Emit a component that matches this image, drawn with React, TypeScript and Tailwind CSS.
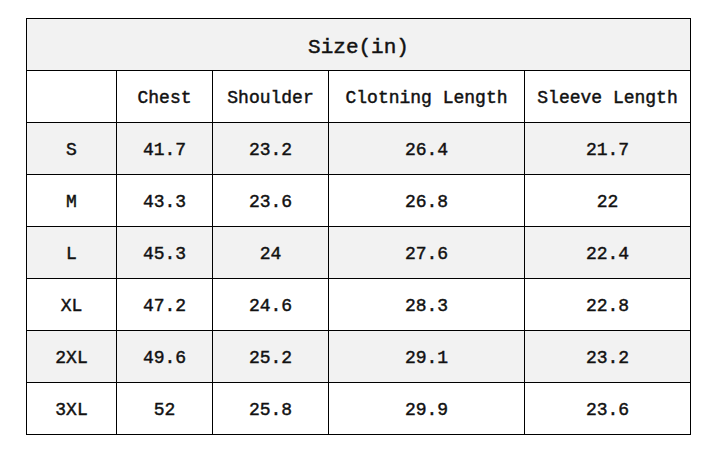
import React from "react";

const cols = ["", "Chest", "Shoulder", "Clotning Length", "Sleeve Length"];
const rows = [
  ["S", "41.7", "23.2", "26.4", "21.7"],
  ["M", "43.3", "23.6", "26.8", "22"],
  ["L", "45.3", "24", "27.6", "22.4"],
  ["XL", "47.2", "24.6", "28.3", "22.8"],
  ["2XL", "49.6", "25.2", "29.1", "23.2"],
  ["3XL", "52", "25.8", "29.9", "23.6"],
];

export default function App() {
  return (
    <div className="w-[716px] h-[452px] bg-white pt-[18px] pl-[26px]" style={{ fontFamily: '"Liberation Mono", monospace' }}>
      <div className="w-[665px] grid grid-cols-[89px_95px_115px_195px_165px] auto-rows-[51px] gap-px bg-black border border-black text-[#111] [-webkit-text-stroke:0.45px_#111]">
        <div className="col-span-5 bg-[#f2f2f2] flex items-center justify-center text-[21px] pt-[6px]">Size(in)</div>
        {cols.map((c, i) => (
          <div key={"h" + i} className="bg-white flex items-center justify-center text-[18px] pt-[4px] whitespace-pre">
            {c}
          </div>
        ))}
        {rows.map((r, ri) =>
          r.map((v, ci) => (
            <div
              key={ri + "-" + ci}
              className={`${ri % 2 === 0 ? "bg-[#f2f2f2]" : "bg-white"} flex items-center justify-center text-[18px] pt-[4px]`}
            >
              {v}
            </div>
          ))
        )}
      </div>
    </div>
  );
}
